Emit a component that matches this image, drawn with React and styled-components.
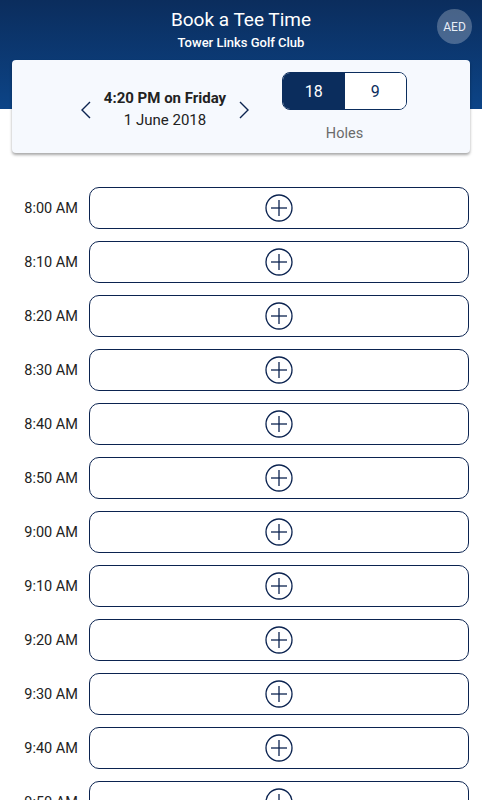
import styled, { createGlobalStyle } from "styled-components";

const GlobalStyle = createGlobalStyle`
  body {
    margin: 0;
    background: #ffffff;
    font-family: "Roboto", "Liberation Sans", sans-serif;
  }
`;

const times = ["8:00 AM", "8:10 AM", "8:20 AM", "8:30 AM", "8:40 AM", "8:50 AM", "9:00 AM", "9:10 AM", "9:20 AM", "9:30 AM", "9:40 AM", "9:50 AM"];

function PlusIcon() {
    return (
        <svg width="28" height="28" viewBox="0 0 28 28">
            <circle cx="14" cy="14" r="13" fill="none" stroke="#0b2350" strokeWidth="1.3" />
            <line x1="14" y1="6" x2="14" y2="22" stroke="#0b2350" strokeWidth="1.3" />
            <line x1="6" y1="14" x2="22" y2="14" stroke="#0b2350" strokeWidth="1.3" />
        </svg>
    );
}

function Chevron({ dir }) {
    return (
        <svg width="12" height="20" viewBox="0 0 12 20">
            <polyline
                points={dir === "left" ? "10,2 2,10 10,18" : "2,2 10,10 2,18"}
                fill="none" stroke="#0b2350" strokeWidth="1.4" />
        </svg>
    );
}

export default function App() {
    return (
        <Page>
            <GlobalStyle />
            <Header>
                <Title>Book a Tee Time</Title>
                <Subtitle>Tower Links Golf Club</Subtitle>
                <Currency>AED</Currency>
            </Header>
            <Card>
                <DatePicker>
                    <Arrow><Chevron dir="left" /></Arrow>
                    <DateText>
                        <strong>4:20 PM on Friday</strong>
                        <span>1 June 2018</span>
                    </DateText>
                    <Arrow><Chevron dir="right" /></Arrow>
                </DatePicker>
                <HolesBox>
                    <Toggle>
                        <ToggleOption active>18</ToggleOption>
                        <ToggleOption>9</ToggleOption>
                    </Toggle>
                    <HolesLabel>Holes</HolesLabel>
                </HolesBox>
            </Card>
            <List>
                {times.map(t => (
                    <Row key={t}>
                        <Time>{t}</Time>
                        <Slot><PlusIcon /></Slot>
                    </Row>
                ))}
            </List>
        </Page>
    );
}

const Page = styled.div`
  width: 482px;
  height: 800px;
  overflow: hidden;
`;

const Header = styled.div`
  position: relative;
  height: 109px;
  background: linear-gradient(180deg, #0b2d5d 0%, #0c4487 100%);
  color: white;
  display: flex;
  flex-direction: column;
  align-items: center;
  padding-top: 8px;
  box-sizing: border-box;
`;

const Title = styled.div`
  font-size: 19px;
  line-height: 24px;
`;

const Subtitle = styled.div`
  font-size: 13px;
  line-height: 22px;
  font-weight: 500;
`;

const Currency = styled.div`
  position: absolute;
  right: 10px;
  top: 9px;
  width: 35px;
  height: 35px;
  border-radius: 50%;
  background: rgba(255, 255, 255, 0.25);
  font-size: 12px;
  color: #e8eef7;
  display: flex;
  align-items: center;
  justify-content: center;
`;

const Card = styled.div`
  margin: -49px 12px 0;
  height: 93px;
  background: #f6f9fe;
  border-radius: 4px;
  box-shadow: 0 2px 3px rgba(0, 0, 0, 0.35);
  position: relative;
  display: flex;
  align-items: flex-start;
  box-sizing: border-box;
  padding: 12px 0 0 68px;
`;

const DatePicker = styled.div`
  display: flex;
  align-items: center;
  margin-top: 16px;
`;

const Arrow = styled.div`
  display: flex;
  width: 12px;
`;

const DateText = styled.div`
  display: flex;
  flex-direction: column;
  align-items: center;
  width: 146px;
  color: #222;
  strong {
    font-size: 15px;
    font-weight: 700;
    line-height: 21px;
  }
  span {
    font-size: 15px;
    line-height: 23px;
  }
`;

const HolesBox = styled.div`
  display: flex;
  flex-direction: column;
  align-items: center;
  margin-left: 32px;
`;

const Toggle = styled.div`
  display: flex;
  width: 125px;
  height: 38px;
  border: 1px solid #0b2d5d;
  border-radius: 8px;
  overflow: hidden;
  box-sizing: border-box;
`;

const ToggleOption = styled.div`
  flex: 1;
  display: flex;
  align-items: center;
  justify-content: center;
  font-size: 16px;
  background: ${props => props.active ? "#0b2d5d" : "#ffffff"};
  color: ${props => props.active ? "#ffffff" : "#0b2d5d"};
`;

const HolesLabel = styled.div`
  margin-top: 15px;
  font-size: 14.5px;
  color: #6b6b6b;
`;

const List = styled.div`
  display: flex;
  flex-direction: column;
  gap: 12px;
  padding: 34px 13px 0 0;
`;

const Row = styled.div`
  display: flex;
  align-items: center;
`;

const Time = styled.div`
  width: 78px;
  text-align: right;
  font-size: 14.5px;
  color: #222;
  margin-right: 11px;
`;

const Slot = styled.div`
  flex: 1;
  height: 42px;
  border: 1.5px solid #0b2350;
  border-radius: 10px;
  box-sizing: border-box;
  display: flex;
  align-items: center;
  justify-content: center;
`;
